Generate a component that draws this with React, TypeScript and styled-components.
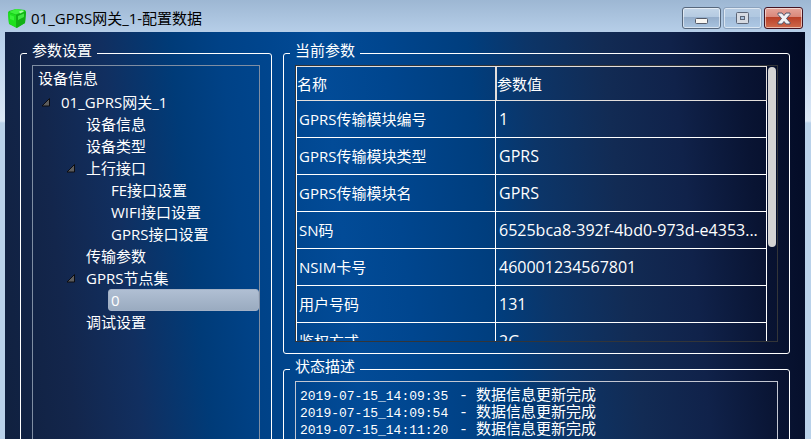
import { useState } from "react";
import styled, { createGlobalStyle, css } from "styled-components";

const uiFont = `"Open Sans", "Noto Sans CJK SC", sans-serif`;
const plainFont = `"Liberation Mono", "Noto Sans CJK SC", monospace`;

const GlobalStyle = createGlobalStyle`
  *, *::before, *::after { box-sizing: border-box; }
  body { margin: 0; font-family: ${uiFont}; font-size: 15px; color: #fff; }
  button { font: inherit; color: inherit; background: none; border: 0; padding: 0; }
`;

const Page = styled.div`
  height: 100vh;
  overflow: hidden;
`;

const Window = styled.div`
  display: flex;
  flex-direction: column;
  height: calc(100vh + 60px);
  padding: 0 6px 6px 5px;
  background: linear-gradient(#9db7d3 0, #b6cee8 32px, #bdd4ee 50px, #dce8f6 121px, #bad2ea 123px);
`;

const TitleBar = styled.header`
  display: flex;
  align-items: center;
  flex: none;
  height: 32px;
  padding: 4px 2px 0 3px;
`;

const Title = styled.h1`
  flex: 1;
  margin: 0 0 0 5px;
  font-size: 15px;
  font-weight: 400;
  line-height: 28px;
  color: #000;
`;

const WindowButtons = styled.div`
  display: flex;
  gap: 2px;
`;

const WindowButton = styled.button<{ $kind: "normal" | "faded" | "close" }>`
  display: flex;
  align-items: center;
  justify-content: center;
  width: 39px;
  height: 22px;
  border-radius: 3px;
  border: 1px solid #56677c;
  box-shadow: inset 0 0 0 1px rgba(255, 255, 255, 0.55);
  background: linear-gradient(#c3d5e8 0, #b4cae1 45%, #95aecb 46%, #a9c4e0 100%);
  ${(p) =>
    p.$kind === "faded" &&
    css`
      border-color: #8ba2bd;
      background: linear-gradient(#b7cce3 0, #b0c8e1 45%, #a2bcd9 46%, #aec9e5 100%);
    `}
  ${(p) =>
    p.$kind === "close" &&
    css`
      border-color: #431422;
      background: linear-gradient(#e5a59a 0, #d9877a 45%, #b93f27 46%, #cf6a4c 100%);
    `}
`;

const Client = styled.main`
  display: grid;
  grid-template-columns: 252px minmax(0, 1fr);
  gap: 11px;
  flex: 1;
  min-height: 0;
  padding: 13px 15px 12px;
  background: linear-gradient(
    84deg,
    #10203e 0%,
    #13264c 9%,
    #112f60 17%,
    #003b78 25%,
    #004287 31%,
    #00468f 37%,
    #024b97 43%,
    #00468f 50%,
    #003e7e 60%,
    #0c3568 67%,
    #122b54 76%,
    #10224a 84%,
    #091433 92%,
    #020a24 100%
  );
`;

const Column = styled.div`
  display: flex;
  flex-direction: column;
  gap: 7px;
  min-width: 0;
  min-height: 0;
`;

const Group = styled.fieldset<{ $fill?: boolean }>`
  display: flex;
  flex-direction: column;
  flex: ${(p) => (p.$fill ? "1" : "none")};
  min-width: 0;
  min-height: 0;
  margin: 0;
  padding: 4px 11px 11px;
  border: 1px solid #fff;
  border-radius: 3px;
`;

const Legend = styled.legend`
  margin-left: -5px;
  padding: 0 5px;
  font-family: ${plainFont};
  font-size: 15px;
  line-height: 16px;
`;

const TreeBox = styled.div`
  flex: 1;
  border: 1px solid #7f8ea3;
`;

const TreeHeader = styled.div`
  padding-left: 5px;
  line-height: 25px;
`;

const TreeList = styled.ul`
  margin: 0;
  padding: 0;
  list-style: none;
`;

const SubList = styled(TreeList)`
  padding-left: 25px;
`;

const TreeRow = styled.div`
  display: flex;
  height: 22px;
`;

const Toggle = styled.button<{ $open: boolean }>`
  display: flex;
  align-items: center;
  justify-content: center;
  width: 25px;
  svg {
    transform: ${(p) => (p.$open ? "none" : "rotate(-45deg)")};
  }
`;

const ToggleSpace = styled.span`
  width: 25px;
`;

const TreeLabel = styled.button<{ $selected: boolean }>`
  flex: 1;
  padding: 0 2px;
  text-align: left;
  line-height: 20px;
  white-space: nowrap;
  border: 1px solid transparent;
  border-radius: 3px;
  ${(p) =>
    p.$selected &&
    css`
      border-color: #a3b1c6;
      background: linear-gradient(#b0bfd3, #9aabc0);
    `}
`;

const TableFrame = styled.div`
  display: flex;
  height: 277px;
  border: 1px solid #333538;
`;

const TableViewport = styled.div`
  flex: 1;
  min-width: 0;
  overflow-y: auto;
  scrollbar-width: none;
`;

const Table = styled.table`
  width: 100%;
  table-layout: fixed;
  border-collapse: separate;
  border-spacing: 0;
  border-left: 1px solid #fff;
`;

const HeadCell = styled.th<{ $first?: boolean }>`
  width: ${(p) => (p.$first ? "199px" : "auto")};
  height: 35px;
  padding: 0 1px 0 0;
  text-align: left;
  font-weight: 400;
  line-height: 22px;
  border: 1px solid #e3dfdc;
  border-left-width: ${(p) => (p.$first ? "0" : "1px")};
`;

const Cell = styled.td`
  height: 37px;
  padding: 0 2px;
  line-height: 22px;
  white-space: nowrap;
  overflow: hidden;
  border-right: 1px solid #fff;
  border-bottom: 1px solid #fff;
`;

const ValueCell = styled(Cell)`
  padding: 0 3px;
  font-size: 16px;
`;

const ScrollTrack = styled.div`
  width: 10px;
  padding: 1px 1px;
`;

const ScrollThumb = styled.div`
  width: 8px;
  height: 66%;
  border-radius: 4px;
  background: #d3d3d3;
`;

const LogBox = styled.div`
  flex: 1;
  padding: 6px 4px;
  border: 1px solid #c3c7d2;
  font-family: ${plainFont};
`;

const LogLine = styled.div`
  display: flex;
  gap: 8px;
  line-height: 17px;
`;

const LogTime = styled.time`
  width: 151px;
  font-size: 13px;
`;

const CubeIcon = () => (
  <svg width="18" height="19" viewBox="0 0 18 19" aria-hidden="true">
    <path d="M0 3.500 1 2l7-2 9 1 1 2-1 11-8 5-8-4z" fill="#14c818" />
    <path d="M1 3 8 0l9 1.500-9 4z" fill="#3cf03c" />
    <path d="m0 3.500 8 2.500v12.500l-7-4z" fill="#1ee01f" />
    <path d="m8 6 10-3.500-1 11.500-9 5z" fill="#12b016" />
    <path d="m2 6 4 1.500v4l-4-1.500z" fill="#38f238" />
    <path d="m10 7 6-2.500v3.500l-6 3z" fill="#42e644" />
    <path d="m11 2.500 3-1 2 1-4 2z" fill="#a6fba2" />
  </svg>
);

const MinimizeIcon = () => (
  <svg width="13" height="16" viewBox="0 0 13 16" aria-hidden="true">
    <rect x="0.5" y="8.5" width="12" height="5" rx="1" fill="#f8f6f2" stroke="#555b68" />
  </svg>
);

const MaximizeIcon = () => (
  <svg width="13" height="12" viewBox="0 0 13 12" aria-hidden="true">
    <rect x="0.5" y="0.5" width="12" height="11" rx="1" fill="#d5dae2" stroke="#5b6576" />
    <rect x="4.5" y="4.5" width="4" height="3" fill="#a9c0da" stroke="#5b6576" />
  </svg>
);

const CloseIcon = () => (
  <svg width="14" height="13" viewBox="0 0 14 13" aria-hidden="true">
    <path
      d="M1 1h4l2 2.5L9 1h4v1.5L9.5 6.5l3.500 4V12H9L7 9.500 5 12H1v-1.500l3.500-4L1 2.500z"
      fill="#f1f2f4"
      stroke="#53566a"
      strokeLinejoin="round"
    />
  </svg>
);

const ArrowIcon = () => (
  <svg width="9" height="9" viewBox="0 0 9 9" aria-hidden="true">
    <path d="M8.500 .5v7.500H1z" fill="#5d5d5d" stroke="#0c0c10" strokeLinejoin="round" />
  </svg>
);

interface Node {
  id: string;
  label: string;
  children?: Node[];
}

const tree: Node[] = [
  {
    id: "gateway",
    label: "01_GPRS网关_1",
    children: [
      { id: "info", label: "设备信息" },
      { id: "type", label: "设备类型" },
      {
        id: "uplink",
        label: "上行接口",
        children: [
          { id: "fe", label: "FE接口设置" },
          { id: "wifi", label: "WIFI接口设置" },
          { id: "gprs", label: "GPRS接口设置" },
        ],
      },
      { id: "transfer", label: "传输参数" },
      { id: "nodes", label: "GPRS节点集", children: [{ id: "node0", label: "0" }] },
      { id: "debug", label: "调试设置" },
    ],
  },
];

const params = [
  ["GPRS传输模块编号", "1"],
  ["GPRS传输模块类型", "GPRS"],
  ["GPRS传输模块名", "GPRS"],
  ["SN码", "6525bca8-392f-4bd0-973d-e4353..."],
  ["NSIM卡号", "460001234567801"],
  ["用户号码", "131"],
  ["鉴权方式", "2G"],
];

const logs = [
  ["2019-07-15_14:09:35", "数据信息更新完成"],
  ["2019-07-15_14:09:54", "数据信息更新完成"],
  ["2019-07-15_14:11:20", "数据信息更新完成"],
];

interface TreeItemProps {
  node: Node;
  selected: string;
  onSelect: (id: string) => void;
}

function TreeItem({ node, selected, onSelect }: TreeItemProps) {
  const [open, setOpen] = useState(true);
  return (
    <li>
      <TreeRow>
        {node.children ? (
          <Toggle $open={open} aria-label={node.label} aria-expanded={open} onClick={() => setOpen(!open)}>
            <ArrowIcon />
          </Toggle>
        ) : (
          <ToggleSpace />
        )}
        <TreeLabel $selected={selected === node.id} onClick={() => onSelect(node.id)}>
          {node.label}
        </TreeLabel>
      </TreeRow>
      {node.children && open && (
        <SubList>
          {node.children.map((child) => (
            <TreeItem key={child.id} node={child} selected={selected} onSelect={onSelect} />
          ))}
        </SubList>
      )}
    </li>
  );
}

export default function App() {
  const [selected, setSelected] = useState("node0");
  return (
    <Page>
      <GlobalStyle />
      <Window>
        <TitleBar>
          <CubeIcon />
          <Title>01_GPRS网关_1-配置数据</Title>
          <WindowButtons>
            <WindowButton $kind="normal" aria-label="最小化">
              <MinimizeIcon />
            </WindowButton>
            <WindowButton $kind="faded" aria-label="最大化">
              <MaximizeIcon />
            </WindowButton>
            <WindowButton $kind="close" aria-label="关闭">
              <CloseIcon />
            </WindowButton>
          </WindowButtons>
        </TitleBar>
        <Client>
          <Group $fill>
            <Legend>参数设置</Legend>
            <TreeBox>
              <TreeHeader>设备信息</TreeHeader>
              <TreeList>
                {tree.map((node) => (
                  <TreeItem key={node.id} node={node} selected={selected} onSelect={setSelected} />
                ))}
              </TreeList>
            </TreeBox>
          </Group>
          <Column>
            <Group>
              <Legend>当前参数</Legend>
              <TableFrame>
                <TableViewport>
                  <Table>
                    <thead>
                      <tr>
                        <HeadCell $first>名称</HeadCell>
                        <HeadCell>参数值</HeadCell>
                      </tr>
                    </thead>
                    <tbody>
                      {params.map(([name, value]) => (
                        <tr key={name}>
                          <Cell>{name}</Cell>
                          <ValueCell>{value}</ValueCell>
                        </tr>
                      ))}
                    </tbody>
                  </Table>
                </TableViewport>
                <ScrollTrack>
                  <ScrollThumb />
                </ScrollTrack>
              </TableFrame>
            </Group>
            <Group $fill>
              <Legend>状态描述</Legend>
              <LogBox>
                {logs.map(([time, message]) => (
                  <LogLine key={time}>
                    <LogTime>{time}</LogTime>
                    <span>-</span>
                    <span>{message}</span>
                  </LogLine>
                ))}
              </LogBox>
            </Group>
          </Column>
        </Client>
      </Window>
    </Page>
  );
}
